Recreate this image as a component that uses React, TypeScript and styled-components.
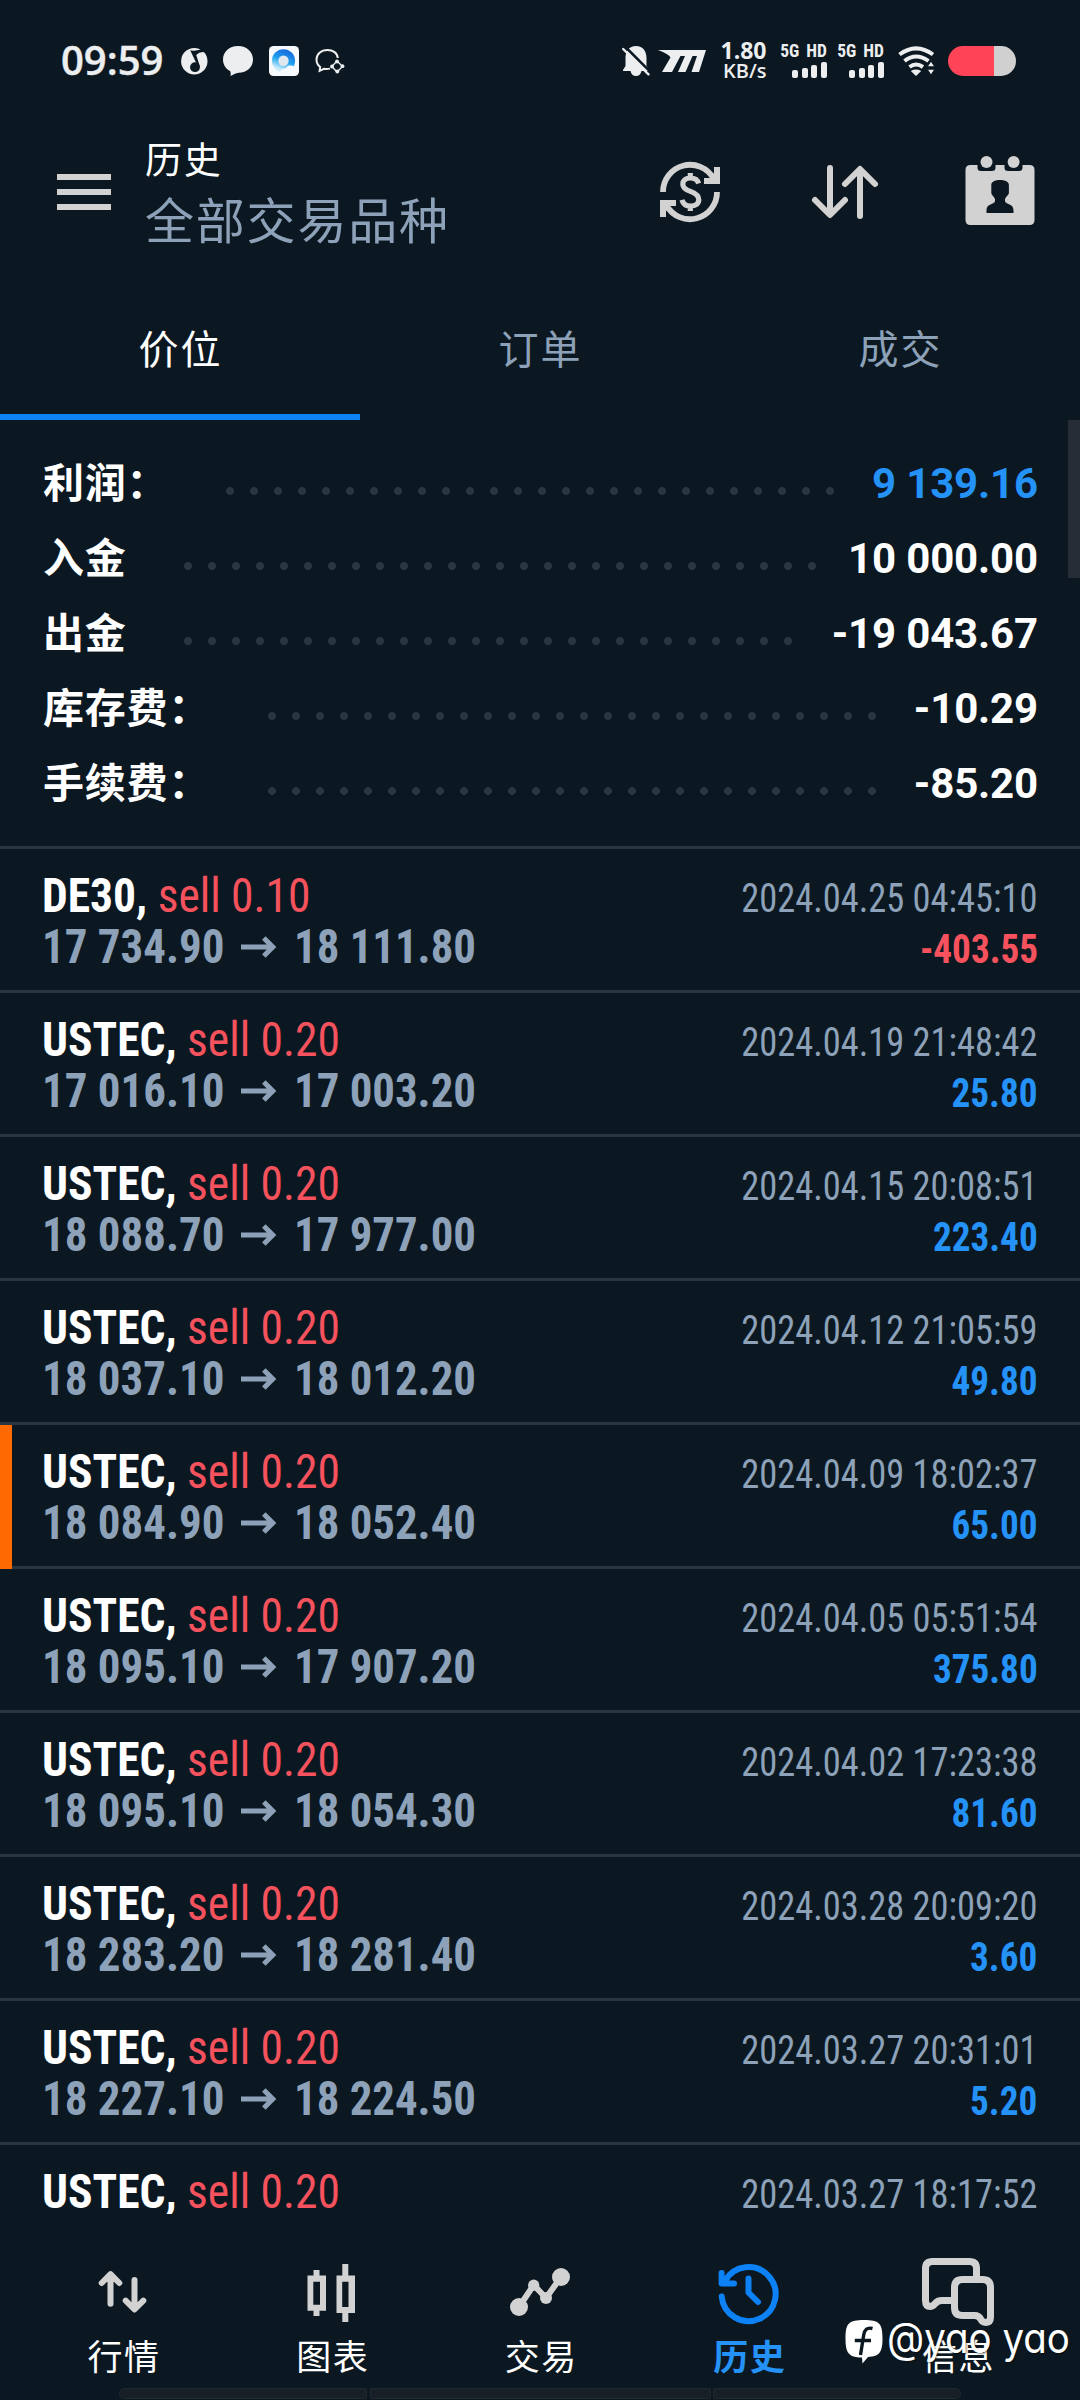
import React from "react";
import styled, { createGlobalStyle } from "styled-components";

const CJK = `"Noto Sans CJK SC", "Noto Sans", sans-serif`;
const NUM = `Roboto, "Noto Sans CJK SC", sans-serif`;
const COND = `"Roboto Condensed", Roboto, "Noto Sans CJK SC", sans-serif`;
const STATUS = `"Open Sans", "Noto Sans", sans-serif`;

const c = {
  bg: "#0c1821",
  line: "#2a3542",
  muted: "#8da2b9",
  icon: "#d2d2d2",
  blue: "#2492f7",
  accent: "#0d82f6",
  red: "#f5525d",
  status: "#eceeef",
};

const GlobalStyle = createGlobalStyle`
  * { box-sizing: border-box; }
  body { margin: 0; background: ${c.bg}; }
  svg { display: block; flex: none; }
`;

const Screen = styled.div`
  position: relative;
  display: flex;
  flex-direction: column;
  width: 1080px;
  height: 2400px;
  overflow: hidden;
  background: ${c.bg};
  color: #fff;
  font-family: ${NUM};
`;

/* ---------- status bar ---------- */

const StatusBar = styled.div`
  display: flex;
  align-items: center;
  justify-content: space-between;
  height: 122px;
  padding: 0 64px 0 61px;
  color: ${c.status};
`;
const StatusGroup = styled.div<{ $gap: number }>`
  display: flex;
  align-items: center;
  gap: ${(p) => p.$gap}px;
`;
const Clock = styled.div`
  width: 104px;
  margin-bottom: 3px;
  font: 600 40px/60px ${STATUS};
  white-space: nowrap;
  -webkit-text-stroke: 0.4px ${c.status};
`;
const Speed = styled.div`
  display: flex;
  flex-direction: column;
  align-items: flex-end;
  width: 47px;
  font: 700 23px/19.6px ${STATUS};
`;
const SpeedUnit = styled.span`
  font-size: 20px;
  font-weight: 600;
`;
const Signal = styled.div`
  display: flex;
  flex-direction: column;
  align-items: flex-end;
  gap: 4px;
  width: 47px;
  font: 700 17.5px/13px ${COND};
  white-space: nowrap;
  word-spacing: 3px;
`;
const Bars = styled.div`
  display: flex;
  align-items: flex-end;
  gap: 3.6px;
  height: 16px;
`;
const Bar = styled.i<{ $h: number }>`
  width: 6px;
  height: ${(p) => p.$h}px;
  border-radius: 2px;
  background: ${c.status};
`;
const Battery = styled.div`
  width: 68px;
  height: 30px;
  border-radius: 15px;
  background: linear-gradient(90deg, #ff4458 46px, #d0d0d0 46px);
`;

/* ---------- header ---------- */

const Header = styled.header`
  display: flex;
  align-items: center;
  height: 140px;
  padding: 0 44px 0 57px;
  gap: 34px;
`;
const Burger = styled.div`
  display: flex;
  flex-direction: column;
  gap: 9px;
  width: 54px;
  i {
    height: 6px;
    background: ${c.icon};
  }
`;
const Titles = styled.div`
  flex: 1;
  margin-bottom: 5px;
  font-family: ${CJK};
`;
const Title = styled.div`
  font-size: 37px;
  line-height: 56px;
  letter-spacing: 1.8px;
`;
const Subtitle = styled.div`
  font-size: 49px;
  line-height: 64px;
  letter-spacing: 1.8px;
  color: ${c.muted};
`;
const Actions = styled.div`
  display: flex;
  gap: 83px;
  color: ${c.icon};
`;

/* ---------- tabs ---------- */

const Tabs = styled.nav`
  display: grid;
  grid-template-columns: repeat(3, 1fr);
  height: 158px;
`;
const Tab = styled.div<{ $active?: boolean }>`
  padding: 55px 0 0 1px;
  border-bottom: 6px solid ${(p) => (p.$active ? c.accent : "transparent")};
  color: ${(p) => (p.$active ? "#fff" : c.muted)};
  font: 400 40px/60px ${CJK};
  letter-spacing: 2px;
  text-align: center;
`;

/* ---------- summary ---------- */

const Summary = styled.section`
  position: relative;
  height: 426px;
  padding: 22.6px 42px 0 43px;
`;
const SummaryRow = styled.div`
  display: flex;
  align-items: baseline;
  height: 75px;
`;
const SummaryLabel = styled.span`
  font: 700 41px/75px ${CJK};
  letter-spacing: 0.8px;
`;
const Leader = styled.span<{ $dots: number }>`
  align-self: flex-start;
  width: ${(p) => p.$dots * 24}px;
  height: 8px;
  margin: 44.7px 0 0 57.5px;
  background: radial-gradient(circle at 4px 4px, ${c.line} 3.6px, transparent 4.3px) 0 0 / 24px 8px repeat-x;
`;
const SummaryValue = styled.span<{ $color?: string }>`
  margin-left: auto;
  font: 700 42px/75px ${NUM};
  letter-spacing: -0.15px;
  color: ${(p) => p.$color || "#fff"};
`;
const ScrollThumb = styled.div`
  position: absolute;
  top: 0;
  right: 0;
  width: 12px;
  height: 158px;
  background: #262d37;
`;

/* ---------- deals ---------- */

const List = styled.section`
  height: 1368px;
  overflow: hidden;
`;
const Deal = styled.div`
  position: relative;
  display: flex;
  justify-content: space-between;
  height: 144px;
  border-top: 3px solid ${c.line};
  padding: 0 42.3px 0 42px;
  white-space: pre;
  font-family: ${COND};
`;
const Marker = styled.div`
  position: absolute;
  z-index: 1;
  left: 0;
  top: 0;
  width: 12px;
  height: 144px;
  background: #ff6a00;
`;
const DealMain = styled.div`
  padding-top: 22px;
  font-size: 48px;
`;
const DealSide = styled.div`
  padding-top: 24.5px;
  font-size: 40px;
  text-align: right;
`;
const Squeeze = styled.div<{ $x: number; $from?: string; $lh: number }>`
  width: max-content;
  margin-left: ${(p) => (p.$from === "right" ? "auto" : 0)};
  line-height: ${(p) => p.$lh}px;
  transform: scaleX(${(p) => p.$x});
  transform-origin: ${(p) => p.$from || "left"} center;
`;
const Symbol = styled.b`
  font-weight: 700;
`;
const Side = styled.span`
  color: ${c.red};
`;
const Prices = styled.div`
  display: flex;
  align-items: center;
  height: 51px;
  color: ${c.muted};
  font-weight: 700;
`;
const PriceBox = styled.div`
  width: 183px;
`;
const ArrowBox = styled.div`
  width: 69px;
  padding-left: 16px;
`;
const When = styled.span`
  color: ${c.muted};
`;
const Profit = styled.b<{ $loss: boolean }>`
  color: ${(p) => (p.$loss ? c.red : c.blue)};
`;

/* ---------- bottom navigation ---------- */

const BottomNav = styled.nav`
  display: grid;
  grid-template-columns: repeat(5, 1fr);
  height: 186px;
  padding: 42px 18px 0 19px;
  background: ${c.bg};
`;
const NavItem = styled.div<{ $active?: boolean }>`
  display: flex;
  flex-direction: column;
  align-items: center;
  gap: 2px;
  color: ${(p) => (p.$active ? c.accent : c.icon)};
`;
const NavLabel = styled.span<{ $active?: boolean }>`
  color: ${(p) => (p.$active ? c.blue : "#fff")};
  font: ${(p) => (p.$active ? 700 : 400)} 35px/50px ${CJK};
  letter-spacing: 1.5px;
  margin-right: -1.5px;
`;
const GestureBar = styled.div`
  position: absolute;
  left: 119px;
  top: 2388px;
  display: grid;
  grid-template-columns: 248px 341px 248px;
  gap: 2.5px;
  height: 11px;
`;
const GestureSegment = styled.i<{ $radius: string }>`
  border: 1.5px solid #212930;
  border-radius: ${(p) => p.$radius};
  background: #181f26;
`;
const Watermark = styled.div`
  position: absolute;
  left: 845px;
  top: 2310px;
  display: flex;
  gap: 4px;
  padding-top: 10px;
`;
const WatermarkText = styled.span`
  margin-top: -9px;
  font: 400 42.5px/54px Inter, ${CJK};
  font-feature-settings: "cv11";
  white-space: nowrap;
  transform: scaleX(0.905);
  transform-origin: left center;
  text-shadow: 1px 1px 2px rgba(0, 0, 0, 0.5);
`;

/* ---------- drawings ---------- */

const Stroke = ({ w = 6, children }: { w?: number; children: React.ReactNode }) => (
  <svg width="72" height="72" viewBox="0 0 72 72" fill="none" stroke="currentColor" strokeWidth={w} strokeLinecap="round" strokeLinejoin="round">
    {children}
  </svg>
);

const CurrencyIcon = () => (
  <svg width="72" height="72" viewBox="0 0 72 72" fill="none" stroke={c.icon} strokeWidth="5.8">
    {[0, 180].map((r) => (
      <g key={r} transform={`rotate(${r} 36 36)`}>
        <path d="M9 36A27 27 0 0 1 59.5 22.5" />
        <path d="M60 11H66V28H50V22H56L60 17Z" fill={c.icon} stroke="none" />
      </g>
    ))}
    <path strokeWidth="5.2" d="M44.6 27.5C43.6 24 40.8 22 36.5 22C31.5 22 28.8 24.6 28.8 28.2C28.8 32 31.6 33.6 36.4 35.4C41.4 37.2 44.8 39.4 44.8 43.8C44.8 47.8 41.5 50 36.6 50C32 50 29 47.8 28 43.8M36.3 17V22M36.3 50V55" />
  </svg>
);
const SortIcon = () => (
  <Stroke>
    <path d="M21 12V58.5M6 44L21 59L36 44M51 60V13.5M36 28L51 13L66 28" />
  </Stroke>
);
const CalendarIcon = () => (
  <svg width="72" height="72" viewBox="0 0 72 72" fill={c.icon} overflow="visible">
    <path
      fillRule="evenodd"
      d="M6.5 9H13.5V11.5Q13.5 15 17 15H28Q31.5 15 31.5 11.5V9H40.5V11.5Q40.5 15 44 15H55Q58.5 15 58.5 11.5V9H65.5Q70.5 9 70.5 14V64Q70.5 69 65.5 69H6.5Q1.5 69 1.5 64V14Q1.5 9 6.5 9Z
      M36 24C31 24 27.3 25.5 27.3 29V37C27.6 39 29 39.5 31 43V45C30.5 48.5 22.5 47.5 22.5 54V57H49.5V54C49.5 47.5 41.5 48.5 41 45V43C43 39.5 44.6 39 44.9 37V29C44.9 25.5 41 24 36 24Z"
    />
    <circle cx="22.5" cy="6" r="6" />
    <circle cx="49.6" cy="6" r="6" />
  </svg>
);

const QuotesIcon = () => (
  <Stroke>
    <path d="M23.5 47.7V18.5M14.7 27L23.5 18.2L32.3 27M47.5 24V53M38.7 44.7L47.5 53.5L56.3 44.7" />
  </Stroke>
);
const ChartIcon = () => (
  <svg width="72" height="72" viewBox="0 0 72 72" fill="currentColor">
    <path fillRule="evenodd" d="M17.5 14H23.5V19.5H30V54.7H23.5V60H17.5V54.7H11.5V19.5H17.5ZM17.3 25.7V48.7H24V25.7Z" />
    <path fillRule="evenodd" d="M46.3 8H52.3V19.5H59V57H52.3V66H46.3V57H40.5V19.5H46.3ZM46.2 25.7V51H52.5V25.7Z" />
  </svg>
);
const TradeIcon = () => (
  <Stroke>
    <path d="M15 51L29.7 29L42 42L57 21" />
    <g fill="currentColor" stroke="none">
      <circle cx="15" cy="51" r="9" />
      <circle cx="29.7" cy="29.2" r="5.6" />
      <circle cx="42" cy="42" r="6" />
      <circle cx="57" cy="21" r="9" />
    </g>
  </Stroke>
);
const HistoryIcon = () => (
  <Stroke>
    <path d="M8.7 40.5A27 27 0 1 0 12 25" />
    <path d="M8.6 17V27.5H21M9 27L14 22" />
    <path d="M35.5 22.5V36.5L45 46" />
  </Stroke>
);
const MessagesIcon = () => (
  <Stroke w={7}>
    <path strokeLinecap="butt" d="M54.5 21V12.5Q54.5 5.5 47.5 5.5H10.5Q3.5 5.5 3.5 12.5V44.5Q3.5 50.5 8.5 50.5Q11 50.3 13 47.7Q15.5 44.6 20 44.6H31" />
    <path d="M68.5 31.5Q68.5 23.5 60.5 23.5H40.5Q32.5 23.5 32.5 31.5V51.5Q32.5 59.5 40.5 59.5H52.5Q57 59.5 58.8 63.2Q60.2 66.5 64 66.5Q68.5 66.3 68.5 61Z" />
  </Stroke>
);

const MusicIcon = () => (
  <svg width="27" height="28" viewBox="0 0 27 28">
    <circle cx="13.3" cy="14.2" r="13.2" fill={c.status} />
    <path d="M9.2 3.2Q16 5 23.2 0.5L23.5 5.2Q18.5 4.5 15.2 8L19 19.8L16.2 18Z" fill={c.bg} />
    <circle cx="14" cy="20.2" r="4.9" fill={c.bg} />
  </svg>
);
const BubbleIcon = () => (
  <svg width="30" height="30" viewBox="0 0 30 30" fill={c.status}>
    <path d="M15 0C24 0 30 6 30 13.6C30 21.4 24 26.8 15.6 26.8C12.5 27 10.6 28.6 7.4 30Q8 27.5 7.3 25.3C3 23 0 19 0 13.6C0 6 6 0 15 0Z" />
  </svg>
);
const BrowserIcon = () => (
  <svg width="30" height="30" viewBox="0 0 30 30">
    <defs>
      <linearGradient id="ring" x1="0.7" y1="0" x2="0.3" y2="1">
        <stop offset="0" stopColor="#1673e0" />
        <stop offset="0.5" stopColor="#22a4ee" />
        <stop offset="1" stopColor="#c9ecfb" />
      </linearGradient>
    </defs>
    <rect width="30" height="30" rx="4.5" fill="#f7fafc" />
    <circle cx="14.5" cy="14.8" r="8.4" fill="#dfe8ef" stroke="url(#ring)" strokeWidth="6.4" />
    <path d="M11 26.5Q11.5 22.5 16.5 22.5Q18 19 22 19.5Q26.5 20 26.5 24V26.5Z" fill="#f7fbff" />
  </svg>
);
const ChatLinkIcon = () => (
  <svg width="30" height="26" viewBox="0 0 30 26" fill="none" stroke={c.status} strokeWidth="2">
    <path d="M22.8 10C22.4 5 18 2 12.5 2C6 2 1.5 6 1.5 11.5C1.5 14.8 3 17.4 5.2 19L4.6 22.8L9 20.8Q12 21.4 15 20.6" />
    <path d="M22 13L27.5 18.5L22 24L16.8 18.5Z" strokeWidth="1.4" />
    <g fill={c.status} stroke="none">
      <circle cx="22" cy="13.5" r="1.9" />
      <circle cx="27.5" cy="18.2" r="1.9" />
      <circle cx="22.3" cy="23.5" r="1.9" />
      <circle cx="17" cy="18.5" r="1.9" />
    </g>
  </svg>
);
const BellOffIcon = () => (
  <svg width="28" height="30" viewBox="0 0 28 30" fill={c.status}>
    <path d="M3.5 12C3.5 5 7 0 14 0C21 0 24.5 5 24.5 12V20L27 24V25H1V24L3.5 20ZM8.5 25H19.5Q18.5 30 14 30Q9.5 30 8.5 25Z" />
    <path d="M3 0.5L29 26.5" stroke={c.bg} strokeWidth="2.6" />
    <path d="M1.2 3L26.5 28.3" stroke={c.status} strokeWidth="2.4" strokeLinecap="round" />
  </svg>
);
const RacingIcon = () => (
  <svg width="48" height="22" viewBox="0 0 48 22" fill={c.status}>
    <path d="M0 0H48L41 22H33.5L39 6H34.5L27.5 22H20L27 6H22.5L14 22H4L12.5 7.5Q11 4 0 0Z" />
  </svg>
);
const WifiIcon = () => (
  <svg width="37" height="30" viewBox="0 0 37 30" fill="none" stroke={c.status} strokeWidth="4">
    <path d="M1.5 8.5Q18 -3.8 35 8.5M6.5 15Q18 6 30.5 15M11.5 21Q18 16 25 21" />
    <path d="M18 30L12.8 25Q18 22.2 23.2 25Z" fill={c.status} stroke="none" />
    <path d="M33 15L36.8 20.8H29.2ZM33 29L36.8 23.2H29.2Z" fill={c.status} stroke={c.bg} strokeWidth="1" />
  </svg>
);
const WatermarkLogo = () => (
  <svg width="38" height="44" viewBox="0 0 38 44">
    <path d="M19 0C34 0 37.5 3 37.5 18.5C37.5 32 34.5 36.5 23 37L17.5 43.5L17 37.5C3.5 37.3 0.5 33 0.5 18.5C0.5 3 4 0 19 0Z" fill="#fff" />
    <path d="M27.5 8.5C22 7 19.5 10 18.7 15L15.5 35M9.8 20.5H26" fill="none" stroke={c.bg} strokeWidth="3.4" />
  </svg>
);
const PriceArrow = () => (
  <svg width="36" height="22" viewBox="0 0 36 22" fill="none" stroke="currentColor" strokeWidth="5">
    <path d="M0 11H31.5M22.8 2L31.8 11L22.8 20" />
  </svg>
);

/* ---------- data ---------- */

const summary = [
  { label: "利润：", dots: 26, value: "9 139.16", color: c.blue },
  { label: "入金", dots: 27, value: "10 000.00" },
  { label: "出金", dots: 26, value: "-19 043.67" },
  { label: "库存费：", dots: 26, value: "-10.29" },
  { label: "手续费：", dots: 26, value: "-85.20" },
];

const deals = [
  ["DE30", "0.10", "17 734.90", "18 111.80", "2024.04.25 04:45:10", "-403.55"],
  ["USTEC", "0.20", "17 016.10", "17 003.20", "2024.04.19 21:48:42", "25.80"],
  ["USTEC", "0.20", "18 088.70", "17 977.00", "2024.04.15 20:08:51", "223.40"],
  ["USTEC", "0.20", "18 037.10", "18 012.20", "2024.04.12 21:05:59", "49.80"],
  ["USTEC", "0.20", "18 084.90", "18 052.40", "2024.04.09 18:02:37", "65.00"],
  ["USTEC", "0.20", "18 095.10", "17 907.20", "2024.04.05 05:51:54", "375.80"],
  ["USTEC", "0.20", "18 095.10", "18 054.30", "2024.04.02 17:23:38", "81.60"],
  ["USTEC", "0.20", "18 283.20", "18 281.40", "2024.03.28 20:09:20", "3.60"],
  ["USTEC", "0.20", "18 227.10", "18 224.50", "2024.03.27 20:31:01", "5.20"],
  ["USTEC", "0.20", "", "", "2024.03.27 18:17:52", ""],
];
const MARKED_DEAL = 4;

const navItems = [
  { label: "行情", icon: <QuotesIcon /> },
  { label: "图表", icon: <ChartIcon /> },
  { label: "交易", icon: <TradeIcon /> },
  { label: "历史", icon: <HistoryIcon />, active: true },
  { label: "信息", icon: <MessagesIcon /> },
];

const SignalBlock = () => (
  <Signal>
    5G HD
    <Bars>
      {[8, 10, 13, 16].map((h) => (
        <Bar key={h} $h={h} />
      ))}
    </Bars>
  </Signal>
);

export default function App() {
  return (
    <Screen>
      <GlobalStyle />
      <StatusBar>
        <StatusGroup $gap={15.7}>
          <Clock>09:59</Clock>
          <MusicIcon />
          <BubbleIcon />
          <BrowserIcon />
          <ChatLinkIcon />
        </StatusGroup>
        <StatusGroup $gap={13.5}>
          <StatusGroup $gap={8.5}>
            <BellOffIcon />
            <RacingIcon />
          </StatusGroup>
          <Speed>
            <span>1.80</span>
            <SpeedUnit>KB/s</SpeedUnit>
          </Speed>
          <StatusGroup $gap={10}>
            <SignalBlock />
            <SignalBlock />
          </StatusGroup>
          <WifiIcon />
          <Battery />
        </StatusGroup>
      </StatusBar>

      <Header>
        <Burger>
          <i />
          <i />
          <i />
        </Burger>
        <Titles>
          <Title>历史</Title>
          <Subtitle>全部交易品种</Subtitle>
        </Titles>
        <Actions>
          <CurrencyIcon />
          <SortIcon />
          <CalendarIcon />
        </Actions>
      </Header>

      <Tabs>
        <Tab $active>价位</Tab>
        <Tab>订单</Tab>
        <Tab>成交</Tab>
      </Tabs>

      <Summary>
        {summary.map((s) => (
          <SummaryRow key={s.label}>
            <SummaryLabel>{s.label}</SummaryLabel>
            <Leader $dots={s.dots} />
            <SummaryValue $color={s.color}>{s.value}</SummaryValue>
          </SummaryRow>
        ))}
        <ScrollThumb />
      </Summary>

      <List>
        {deals.map(([symbol, volume, open, close, time, profit], i) => (
          <Deal key={time}>
            {i === MARKED_DEAL && <Marker />}
            <DealMain>
              <Squeeze $x={0.948} $lh={50}>
                <Symbol>{symbol}, </Symbol>
                <Side>sell {volume}</Side>
              </Squeeze>
              {open && (
                <Prices>
                  <PriceBox>
                    <Squeeze $x={0.936} $lh={51}>{open}</Squeeze>
                  </PriceBox>
                  <ArrowBox>
                    <PriceArrow />
                  </ArrowBox>
                  <Squeeze $x={0.934} $lh={51}>{close}</Squeeze>
                </Prices>
              )}
            </DealMain>
            <DealSide>
              <Squeeze $x={0.91} $from="right" $lh={50}>
                <When>{time}</When>
              </Squeeze>
              {profit && (
                <Squeeze $x={0.93} $from="right" $lh={51}>
                  <Profit $loss={profit.startsWith("-")}>{profit}</Profit>
                </Squeeze>
              )}
            </DealSide>
          </Deal>
        ))}
      </List>

      <BottomNav>
        {navItems.map((n) => (
          <NavItem key={n.label} $active={n.active}>
            {n.icon}
            <NavLabel $active={n.active}>{n.label}</NavLabel>
          </NavItem>
        ))}
      </BottomNav>

      <GestureBar>
        <GestureSegment $radius="6px 2px 2px 6px" />
        <GestureSegment $radius="2px" />
        <GestureSegment $radius="2px 6px 6px 2px" />
      </GestureBar>
      <Watermark>
        <WatermarkLogo />
        <WatermarkText>@yao yao</WatermarkText>
      </Watermark>
    </Screen>
  );
}
